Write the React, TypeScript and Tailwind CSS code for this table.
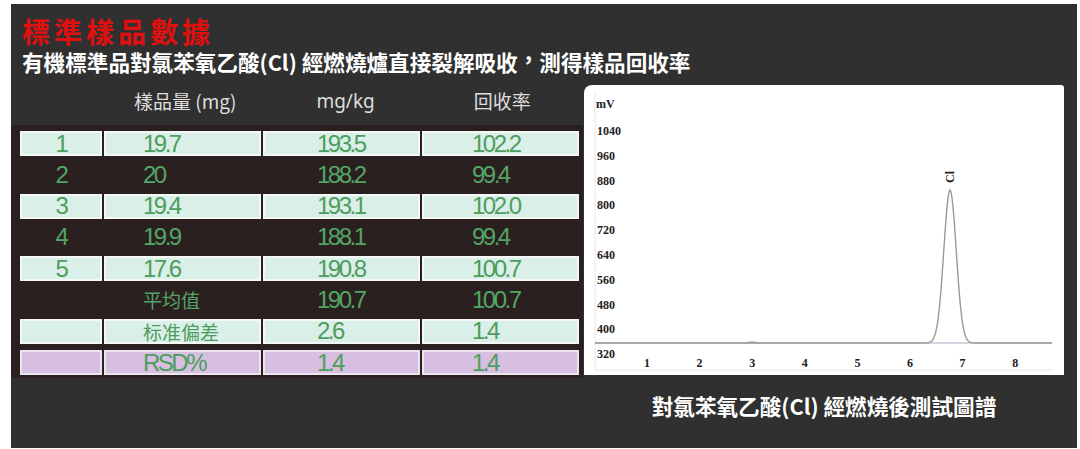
const rows = [
  { tone: "light", cells: ["1", "19.7", "193.5", "102.2"] },
  { tone: "dark", cells: ["2", "20", "188.2", "99.4"] },
  { tone: "light", cells: ["3", "19.4", "193.1", "102.0"] },
  { tone: "dark", cells: ["4", "19.9", "188.1", "99.4"] },
  { tone: "light", cells: ["5", "17.6", "190.8", "100.7"] },
  { tone: "dark", cells: ["", "平均值", "190.7", "100.7"] },
  { tone: "light", cells: ["", "标准偏差", "2.6", "1.4"] },
  { tone: "purple", cells: ["", "RSD%", "1.4", "1.4"] },
];

const yTicks = ["1040", "960", "880", "800", "720", "640", "560", "480", "400", "320"];

function peakPath() {
  // flat baseline with a single gaussian peak near 6.8 min
  const pts: string[] = [];
  for (let x = 11; x <= 468; x += 1) {
    const d = (x - 366) / 6.2;
    const y = 258 - 153 * Math.exp(-0.5 * d * d);
    pts.push(`${x},${y.toFixed(2)}`);
  }
  return "M" + pts.join(" L");
}

function Cell({ tone, idx, text }: { tone: string; idx: number; text: string }) {
  const cjk = /[\u4e00-\u9fff]/.test(text);
  const bg =
    tone === "light"
      ? "bg-[#d9efe8] border-[#f3f8f6]"
      : tone === "purple"
        ? "bg-[#d6bfe0] border-[#ece4ef]"
        : "border-transparent";
  const pad = ["justify-center", "pl-[37px]", "pl-[52px]", "pl-[48px]"][idx];
  const color = tone === "dark" ? "text-[#53a564]" : "text-[#4d9d5d]";
  return (
    <div className={`flex h-[25px] items-center border-2 ${bg} ${pad} ${color}`}>
      <span
        lang={cjk ? "zh-Hans" : undefined}
        className={
          cjk
            ? "text-[19px] leading-none [font-family:'Noto_Sans_CJK_SC',sans-serif]"
            : "text-[24px] leading-none tracking-[-2.5px] [font-family:'Liberation_Sans',Arial,sans-serif]"
        }
      >
        {text}
      </span>
    </div>
  );
}

export default function App() {
  return (
    <div lang="zh-Hant-TW" className="h-[449px] w-[1080px] overflow-hidden bg-white pl-[11px] pt-[4px]">
      <div className="flex h-[444px] w-[1066px] flex-col bg-[#303030] [font-family:'Noto_Sans_CJK_TC',sans-serif]">
        {/* Title */}
        <h1 className="pl-[11px] pt-[13px] text-[28px] font-bold leading-[28px] tracking-[4px] text-[#e10f0f]">
          標準樣品數據
        </h1>
        <p className="mt-[3px] pl-[11px] text-[21.6px] font-bold leading-[28px] text-white">
          有機標準品對氯苯氧乙酸(Cl) 經燃燒爐直接裂解吸收
          <span className="inline-block -translate-y-[0.12em]">，</span>
          測得樣品回收率
        </p>

        <div className="mt-[9px] flex">
          {/* Table */}
          <div className="flex w-[572px] flex-col">
            <div className="flex h-[40px] items-center pb-[8px] text-[19px] text-[#dedede]">
              <span className="ml-[123px]">樣品量 (mg)</span>
              <span className="ml-[80px] [font-family:'Noto_Sans',sans-serif]">mg/kg</span>
              <span className="ml-[99px]">回收率</span>
            </div>
            <div className="h-[253px] bg-[#2a2020] pl-[9px] pt-[6px]">
              <div className="grid grid-cols-[82px_157px_157px_157px] gap-x-[2px] gap-y-[6.3px]">
                {rows.map((r, ri) =>
                  r.cells.map((c, ci) => <Cell key={`${ri}-${ci}`} tone={r.tone} idx={ci} text={c} />)
                )}
              </div>
            </div>
          </div>

          {/* Chart */}
          <div className="ml-[1px] flex flex-col items-center">
            <div className="h-[290px] w-[480px] rounded-tl-[8px] rounded-tr-[3px] bg-white">
              <svg width="480" height="290" viewBox="0 0 480 290">
                <line x1="11" y1="8" x2="11" y2="285" stroke="#e6e6ea" strokeWidth="1" />
                <line x1="11" y1="285" x2="470" y2="285" stroke="#e6e6ea" strokeWidth="1" />
                <g fontFamily="'Liberation Serif', 'Times New Roman', serif" fontWeight="bold" fill="#222">
                  <text x="12" y="23" fontSize="12">mV</text>
                  {yTicks.map((t, i) => (
                    <text key={t} x="13" y={50 + i * 24.8} fontSize="12">
                      {t}
                    </text>
                  ))}
                  {[1, 2, 3, 4, 5, 6, 7, 8].map((n, i) => (
                    <text key={n} x={63 + i * 52.6} y="282" fontSize="12" textAnchor="middle">
                      {n}
                    </text>
                  ))}
                  <text x="0" y="0" fontSize="12" transform="translate(370 92) rotate(-90)" textAnchor="middle">
                    Cl
                  </text>
                </g>
                <line x1="11" y1="258" x2="468" y2="258" stroke="#a9acbf" strokeWidth="1.2" />
                <path d="M160 258 Q168 255 176 258" fill="none" stroke="#b0b0b0" strokeWidth="1" />
                <path d={peakPath()} fill="none" stroke="#9a9a9a" strokeWidth="1.4" />
              </svg>
            </div>
            <p className="mt-[17px] text-[21.6px] font-bold leading-[28px] text-white">
              對氯苯氧乙酸(Cl) 經燃燒後測試圖譜
            </p>
          </div>
        </div>
      </div>
    </div>
  );
}
